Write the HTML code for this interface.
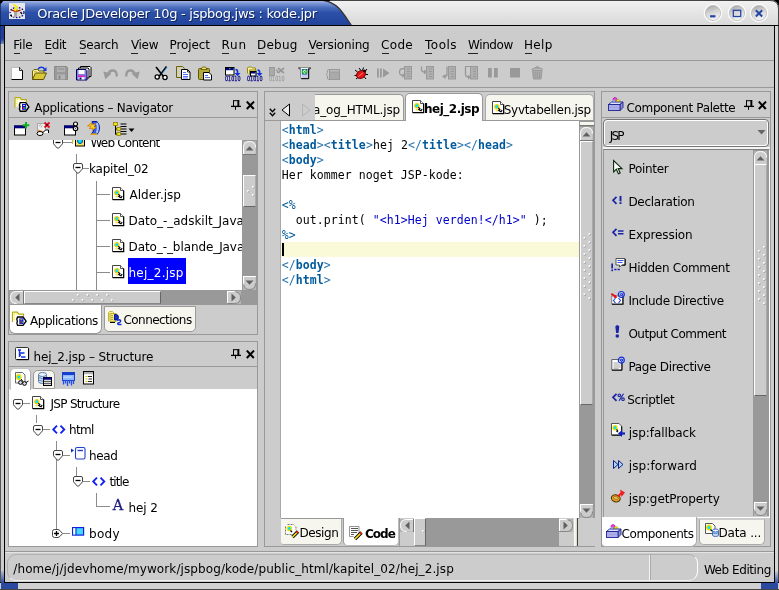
<!DOCTYPE html>
<html lang="da"><head><meta charset="utf-8"><title>Oracle JDeveloper 10g - jspbog.jws : kode.jpr</title>
<style>
html,body{margin:0;padding:0;}
body{width:779px;height:590px;overflow:hidden;background:#cccccc;font-family:"DejaVu Sans","Liberation Sans",sans-serif;font-size:12px;color:#000;}
#win{will-change:transform;position:relative;width:779px;height:590px;overflow:hidden;background:#cccccc;}
#win div,#win span.t,#win span.m,#win svg{position:absolute;box-sizing:border-box;}
#win div{overflow:hidden;}
span.t{font-family:"DejaVu Sans","Liberation Sans",sans-serif;font-size:12px;line-height:14px;white-space:pre;color:#000;}
span.m{font-family:"DejaVu Sans Mono","Liberation Mono",monospace;font-size:11.5px;line-height:15px;white-space:pre;color:#000;}
span.m b{font-weight:bold;}
.k{color:#005a9c;}
.s{color:#0000c8;}
.kb{color:#2a74ad;}

</style></head>
<body>
<div id="win">
<div style="left:0px;top:0px;width:779px;height:26px;background:linear-gradient(#f2f2f2,#e2e2e2 60%,#d8d8d8);"></div>
<svg style="left:0;top:0" width="779" height="26" viewBox="0 0 779 26"><defs><linearGradient id="tb" x1="0" y1="0" x2="0" y2="1"><stop offset="0.04" stop-color="#a4b8e6"/><stop offset="0.12" stop-color="#7f9ad8"/><stop offset="0.3" stop-color="#4a6cbc"/><stop offset="0.5" stop-color="#2c50a8"/><stop offset="1" stop-color="#21429a"/></linearGradient></defs><path d="M0 0H324C338 3 343 13 351.500 25.5H0z" fill="url(#tb)"/><path d="M324 0.5C338 3 343 13 351.500 25.500" fill="none" stroke="#333" stroke-width="1.300"/><path d="M0 0.5H330" stroke="#000" stroke-width="1"/><path d="M0 0H4L0 5z" fill="#000"/><path d="M0 3V26" stroke="#1a2a5a" stroke-width="1.600"/><path d="M330 0.5H770Q778.500 0.500 778.500 9V26" stroke="#444" stroke-width="1" fill="none"/><path d="M770 0H779V9Q779 0 770 0z" fill="#000"/><path d="M0 25.5H779" stroke="#000" stroke-width="1"/></svg>
<span class="t" style="left:37.2px;top:6px;letter-spacing:-0.286px;font-size:13px;line-height:16px;color:#fff;text-shadow:1px 1px 0 #10245a;">Oracle JDeveloper 10g - jspbog.jws : kode.jpr</span>
<svg style="left:9px;top:3px;" width="16" height="16" viewBox="0 0 16 16"><rect width="16" height="16" fill="#e8e8e8"/><ellipse cx="8" cy="9.500" rx="7" ry="5" fill="none" stroke="#000090" stroke-width="1.300" stroke-dasharray="1.500 1.500"/><path d="M11.500 9l1.500 2" stroke="#000" stroke-width="1.300"/><path d="M1.500 12l1.500 1.500" stroke="#000" stroke-width="1.200"/><path d="M3 7.500v4q0 2.500 4 2.500t4-2.500v-4z" fill="#d8d8d8"/><path d="M5 8.500v5.500h3v-5.500z" fill="#a8a8a8"/><path d="M3.200 8v4.500q0.500 1 1.500 1.200v-5.500z" fill="#fff"/><path d="M2.500 7q4.500 2.500 9 0" fill="none" stroke="#c00000" stroke-width="1.300"/><path d="M4 1l3 1.500l2 2l-2.500 1l2.500 2l-3 0.500l-1-2l2-1.500z" fill="#f8f000" stroke="#f8f000" stroke-width="0.800"/><path d="M7 7.500l2-0.500" stroke="#909000" stroke-width="1.200"/></svg>
<svg style="left:703.3px;top:2.7px;" width="20" height="20" viewBox="0 0 20 20"><defs><linearGradient id="bgmin" x1="0" y1="0" x2="0.3" y2="1"><stop offset="0" stop-color="#a0a0a0"/><stop offset="0.55" stop-color="#d6d6d6"/><stop offset="1" stop-color="#f2f2f2"/></linearGradient></defs><circle cx="10" cy="10" r="9.300" fill="#fff" opacity="0.850"/><circle cx="10" cy="10" r="7.600" fill="url(#bgmin)" stroke="#b8b8b8" stroke-width="0.800"/><path d="M7 13.300h5.500" stroke="#2446a6" stroke-width="2.200"/></svg>
<svg style="left:726.8px;top:2.7px;" width="20" height="20" viewBox="0 0 20 20"><defs><linearGradient id="bgmax" x1="0" y1="0" x2="0.3" y2="1"><stop offset="0" stop-color="#a0a0a0"/><stop offset="0.55" stop-color="#d6d6d6"/><stop offset="1" stop-color="#f2f2f2"/></linearGradient></defs><circle cx="10" cy="10" r="9.300" fill="#fff" opacity="0.850"/><circle cx="10" cy="10" r="7.600" fill="url(#bgmax)" stroke="#b8b8b8" stroke-width="0.800"/><rect x="6.300" y="7.300" width="7.400" height="6.200" fill="none" stroke="#2446a6" stroke-width="1.300"/></svg>
<svg style="left:749.4px;top:2.7px;" width="20" height="20" viewBox="0 0 20 20"><defs><linearGradient id="bgclose" x1="0" y1="0" x2="0.3" y2="1"><stop offset="0" stop-color="#a0a0a0"/><stop offset="0.55" stop-color="#d6d6d6"/><stop offset="1" stop-color="#f2f2f2"/></linearGradient></defs><circle cx="10" cy="10" r="9.300" fill="#fff" opacity="0.850"/><circle cx="10" cy="10" r="7.600" fill="url(#bgclose)" stroke="#b8b8b8" stroke-width="0.800"/><path d="M6.800 7.300l6.400 6.200m0-6.200l-6.400 6.200" stroke="#2446a6" stroke-width="1.900"/></svg>
<div style="left:0px;top:26px;width:5px;height:557px;background:#cccccc;border-left:1px solid #555;border-right:1px solid #000;"></div>
<div style="left:0px;top:26px;width:4px;height:18px;background:linear-gradient(#1f3f96,#1f3f96 70%,#8090b8);border-left:1px solid #16307a;"></div>
<div style="left:774px;top:26px;width:5px;height:557px;background:#d4d4d4;border-left:1px solid #000;border-right:1px solid #444;"></div>
<div style="left:0px;top:582px;width:779px;height:8px;background:#d0d0d0;border-top:1px solid #000;border-bottom:1px solid #444;"></div>
<div style="left:1px;top:571px;width:3px;height:12px;background:linear-gradient(#b4bcd4,#2a4aa0);"></div>
<div style="left:1px;top:583px;width:17px;height:6px;background:#2a4aa0;"></div>
<div style="left:761px;top:583px;width:17px;height:6px;background:#2a4aa0;"></div>
<div style="left:775px;top:571px;width:3px;height:13px;background:linear-gradient(#c8ccdc,#2a4aa0);"></div>
<span class="t" style="left:13.3px;top:38px;letter-spacing:-0.267px;">File</span>
<div style="left:14px;top:53px;width:6px;height:1px;background:#222;"></div>
<span class="t" style="left:44.5px;top:38px;letter-spacing:-0.4px;">Edit</span>
<div style="left:45px;top:53px;width:6.5px;height:1px;background:#222;"></div>
<span class="t" style="left:79px;top:38px;letter-spacing:-0.3px;">Search</span>
<div style="left:80px;top:53px;width:6px;height:1px;background:#222;"></div>
<span class="t" style="left:131px;top:38px;letter-spacing:-0.333px;">View</span>
<div style="left:131px;top:53px;width:7px;height:1px;background:#222;"></div>
<span class="t" style="left:169.5px;top:38px;letter-spacing:-0.083px;">Project</span>
<div style="left:170px;top:53px;width:6px;height:1px;background:#222;"></div>
<span class="t" style="left:221.5px;top:38px;letter-spacing:0.75px;">Run</span>
<div style="left:222px;top:53px;width:6.5px;height:1px;background:#222;"></div>
<span class="t" style="left:257px;top:38px;letter-spacing:0.25px;">Debug</span>
<div style="left:258px;top:53px;width:7px;height:1px;background:#222;"></div>
<span class="t" style="left:308.5px;top:38px;letter-spacing:-0.167px;">Versioning</span>
<div style="left:308px;top:53px;width:7px;height:1px;background:#222;"></div>
<span class="t" style="left:381px;top:38px;letter-spacing:0.333px;">Code</span>
<div style="left:382px;top:53px;width:7px;height:1px;background:#222;"></div>
<span class="t" style="left:425px;top:38px;letter-spacing:0.5px;">Tools</span>
<div style="left:425px;top:53px;width:7px;height:1px;background:#222;"></div>
<span class="t" style="left:468px;top:38px;letter-spacing:-0.4px;">Window</span>
<div style="left:468px;top:53px;width:10px;height:1px;background:#222;"></div>
<span class="t" style="left:524px;top:38px;letter-spacing:0.333px;">Help</span>
<div style="left:525px;top:53px;width:7px;height:1px;background:#222;"></div>
<div style="left:5px;top:60px;width:769px;height:1px;background:#999;"></div>
<div style="left:5px;top:87px;width:769px;height:1px;background:#999;"></div>
<div style="left:8px;top:91px;width:250px;height:244px;border:1px solid #999;"></div>
<div style="left:9px;top:117px;width:248px;height:1px;background:#999;"></div>
<span class="t" style="left:34.3px;top:101px;letter-spacing:-0.296px;">Applications – Navigator</span>
<svg style="left:231px;top:100px;" width="10" height="10" viewBox="0 0 10 10"><path d="M2 0.700h6.200M2.500 0.500v5.800M4.500 6.500v3.300" stroke="#000" stroke-width="1" fill="none"/><rect x="6.400" y="0.200" width="1.900" height="6" fill="#000"/><path d="M0 6.400h10" stroke="#000" stroke-width="1.300"/></svg>
<svg style="left:246px;top:101px;" width="9" height="9" viewBox="0 0 9 9"><path d="M0.800 0.600l7 7.400m0.200-7.400l-7.200 7.400" stroke="#000" stroke-width="2" fill="none"/></svg>
<svg style="left:14px;top:97px;overflow:visible;" width="16" height="16" viewBox="0 0 16 16"><path d="M1 10.800V1.200Q1 0.600 1.600 0.600H6L7.500 2.600H12.300V5" fill="#fffff4" stroke="#b4ac10" stroke-width="1.200"/><path d="M2.800 2.500h3M2.800 2.500v7" stroke="#f4ec40" stroke-width="1.200" stroke-dasharray="1 0.700"/><path d="M6.200 5.600H11.800L14.900 9.900L11.800 14.200H6.200Q4.800 12 6 9.900Q4.800 7.600 6.200 5.600z" fill="#fff" stroke="#000" stroke-width="1.400"/><rect x="8" y="7" width="4.200" height="5.800" fill="#0010d8"/><rect x="9" y="8" width="2.200" height="0.900" fill="#f8f060"/><rect x="8.800" y="10" width="1.300" height="2" fill="#f01030"/><rect x="10.200" y="10" width="1.300" height="2" fill="#10c020"/></svg>
<svg style="left:14px;top:121.5px;overflow:visible;" width="16" height="16" viewBox="0 0 16 16"><rect x="0.5" y="4.0" width="11" height="9" fill="#fff" stroke="#000"/><rect x="0" y="3.5" width="12" height="2.800" fill="#000080"/><path d="M12 0v6.500M8.800 3.200h6.500" stroke="#10b020" stroke-width="2"/></svg>
<svg style="left:36px;top:121.5px;overflow:visible;" width="16" height="16" viewBox="0 0 16 16"><path d="M1.500 1.500h8v8h-8z" fill="#eee" stroke="#999" stroke-width="0.8"/><path d="M3 4l2-1.500M5 5.500l1-2" stroke="#888" stroke-width="0.7"/><path d="M8.500 0.500l5 5m0-5l-5 5" stroke="#e01020" stroke-width="1.900"/><rect x="10.200" y="2.200" width="1.600" height="1.600" fill="#400"/><path d="M2 8.500l4 1.500" stroke="#f09020" stroke-width="2"/><ellipse cx="4" cy="11.500" rx="3" ry="2" fill="#fff" stroke="#000" stroke-width="1"/><path d="M6.500 11l3-3h3v3" fill="#fff" stroke="#000" stroke-width="1"/></svg>
<svg style="left:64px;top:121.5px;overflow:visible;" width="16" height="16" viewBox="0 0 16 16"><rect x="0.5" y="4.0" width="11" height="9" fill="#fff" stroke="#000"/><rect x="0" y="3.5" width="12" height="2.800" fill="#000080"/><circle cx="11.500" cy="2" r="2" fill="#fff" stroke="#000" stroke-width="1.200"/><circle cx="11.500" cy="6.500" r="2.200" fill="#fff" stroke="#000" stroke-width="1.200"/><circle cx="11.500" cy="6.500" r="0.700" fill="#555"/></svg>
<svg style="left:87px;top:121px;overflow:visible;" width="16" height="16" viewBox="0 0 16 16"><path d="M5 0.500h5q2.500 3 2.500 6.500t-2.500 6.500h-6q3-3 3-6.500t-2-6.500z" fill="#3858e0" stroke="#0818a0" stroke-width="1"/><path d="M9.800 2q2 4.500 0 10" fill="none" stroke="#a8c8ff" stroke-width="2"/><path d="M0.500 5l4.500-3.500l-0.500 2.500l4 -1.500l-1.500 3.500l2.500 0l-4 3.500l0.500-2.500l-3.500 1l1.500-3z" fill="#ffd820" stroke="#c07000" stroke-width="0.700"/><path d="M3.500 13.200h6.500" stroke="#f0b000" stroke-width="1.500"/></svg>
<svg style="left:113px;top:122px;overflow:visible;" width="16" height="16" viewBox="0 0 16 16"><path d="M2.500 2v10.500M2.500 7h3M2.500 12h3" stroke="#000" stroke-width="1" fill="none"/><path d="M7.500 2h6M7.500 4.500h6M7.500 7h6M7.500 9.500h6M7.500 12h6" stroke="#000" stroke-width="1"/><rect x="0.500" y="0.500" width="4" height="3" fill="#f0e020" stroke="#908000" stroke-width="0.8"/><rect x="4" y="5.500" width="3.500" height="3" fill="#f0e020" stroke="#908000" stroke-width="0.8"/><rect x="4" y="10.500" width="3.500" height="3" fill="#f0e020" stroke="#908000" stroke-width="0.8"/><path d="M15.500 6.500h6l-3 3.500z" fill="#000"/></svg>
<div style="left:242px;top:140px;width:16px;height:150px;background:#999;"></div>
<svg style="left:243px;top:140.5px;" width="13" height="14" viewBox="0 0 13 14"><rect width="13" height="14" fill="#b4b4b4"/><path d="M0.5 14V6.5Q0.5 0.5 6.5 0.5Q12.5 0.5 12.5 6.5V14z" fill="#ccc"/><path d="M0.5 14V6.5Q0.5 0.5 6.5 0.5Q12.5 0.5 12.5 6.5" fill="none" stroke="#fff"/><path d="M0 13.5H13" stroke="#777"/><path d="M2.5 9.500h8l-4 -4.300z" fill="#606060"/></svg>
<svg style="left:243px;top:275.5px;" width="13" height="14" viewBox="0 0 13 14"><rect width="13" height="14" fill="#b4b4b4"/><path d="M0.5 0V7.5Q0.5 13.5 6.5 13.5Q12.5 13.5 12.5 7.5V0z" fill="#ccc"/><path d="M0.5 0V7.5" stroke="#fff"/><path d="M0 0.5H13" stroke="#fff"/><path d="M1 9Q1.5 13.5 6.5 13.5Q12.5 13.5 12.5 7.5" fill="none" stroke="#777" stroke-width="0.8"/><path d="M2.5 4.500h8l-4 4.300z" fill="#606060"/></svg>
<div style="left:243px;top:175px;width:13px;height:32px;background:#ccc;border-top:1px solid #fff;border-left:1px solid #fff;border-bottom:1px solid #666;border-right:1px solid #aaa;"></div>
<svg style="left:243px;top:175px;" width="13" height="32" viewBox="0 0 13 32"><rect x="9.8" y="11.8" width="1.500" height="1.500" fill="#8a8a8a"/><rect x="9" y="11" width="1.700" height="1.700" fill="#fff"/><rect x="4.8" y="15.8" width="1.500" height="1.500" fill="#8a8a8a"/><rect x="4" y="15" width="1.700" height="1.700" fill="#fff"/><rect x="9.8" y="19.8" width="1.500" height="1.500" fill="#8a8a8a"/><rect x="9" y="19" width="1.700" height="1.700" fill="#fff"/></svg>
<div style="left:9px;top:290px;width:233px;height:15px;background:#999;"></div>
<svg style="left:10px;top:291px;" width="14" height="13" viewBox="0 0 14 13"><rect width="14" height="13" fill="#b4b4b4"/><path d="M14 0.5H6.5Q0.5 0.5 0.5 6.5Q0.5 12.5 6.5 12.5H14z" fill="#ccc"/><path d="M14 0.5H6.5Q0.5 0.5 0.5 6.5Q0.5 12.5 6.5 12.5" fill="none" stroke="#fff"/><path d="M13.5 0V13" stroke="#777"/><path d="M9.500 2.5v8l-4.300 -4z" fill="#606060"/></svg>
<svg style="left:227px;top:291px;" width="14" height="13" viewBox="0 0 14 13"><rect width="14" height="13" fill="#b4b4b4"/><path d="M0 0.5H7.5Q13.5 0.5 13.5 6.5Q13.5 12.5 7.5 12.5H0z" fill="#ccc"/><path d="M0.5 0V13" stroke="#fff"/><path d="M0 0.5H7.5" stroke="#fff"/><path d="M9 1Q13.5 1.5 13.5 6.5Q13.5 12.5 7.5 12.5H0" fill="none" stroke="#777" stroke-width="0.8"/><path d="M4.500 2.5v8l4.300 -4z" fill="#606060"/></svg>
<div style="left:24px;top:291px;width:137px;height:13px;background:#ccc;border-top:1px solid #fff;border-left:1px solid #fff;border-bottom:1px solid #888;border-right:1px solid #666;"></div>
<svg style="left:24px;top:291px;" width="137" height="13" viewBox="0 0 137 13"><rect x="48.8" y="8.8" width="1.500" height="1.500" fill="#8a8a8a"/><rect x="48.0" y="8" width="1.700" height="1.700" fill="#fff"/><rect x="53.699999999999996" y="3.8" width="1.500" height="1.500" fill="#8a8a8a"/><rect x="52.9" y="3" width="1.700" height="1.700" fill="#fff"/><rect x="58.5" y="8.8" width="1.500" height="1.500" fill="#8a8a8a"/><rect x="57.7" y="8" width="1.700" height="1.700" fill="#fff"/><rect x="63.4" y="3.8" width="1.500" height="1.500" fill="#8a8a8a"/><rect x="62.6" y="3" width="1.700" height="1.700" fill="#fff"/><rect x="68.3" y="8.8" width="1.500" height="1.500" fill="#8a8a8a"/><rect x="67.5" y="8" width="1.700" height="1.700" fill="#fff"/><rect x="73.1" y="3.8" width="1.500" height="1.500" fill="#8a8a8a"/><rect x="72.3" y="3" width="1.700" height="1.700" fill="#fff"/><rect x="78.0" y="8.8" width="1.500" height="1.500" fill="#8a8a8a"/><rect x="77.2" y="8" width="1.700" height="1.700" fill="#fff"/><rect x="82.89999999999999" y="3.8" width="1.500" height="1.500" fill="#8a8a8a"/><rect x="82.1" y="3" width="1.700" height="1.700" fill="#fff"/><rect x="87.8" y="8.8" width="1.500" height="1.500" fill="#8a8a8a"/><rect x="87.0" y="8" width="1.700" height="1.700" fill="#fff"/></svg>
<div style="left:242px;top:290px;width:16px;height:15px;background:#999;"></div>
<div style="left:9px;top:140px;width:233px;height:150px;background:#fff;">
<div style="left:67px;top:14px;width:1px;height:136px;background:#8c8c8c;"></div>
<div style="left:87px;top:41px;width:1px;height:110px;background:#8c8c8c;"></div>
<div style="left:53px;top:2px;width:10px;height:1px;background:#8c8c8c;"></div>
<div style="left:73px;top:28px;width:7px;height:1px;background:#8c8c8c;"></div>
<svg style="left:44px;top:-2.5px;" width="10" height="11" viewBox="0 0 10 11"><path d="M0.500 2Q0.500 0.500 2 0.500H8Q9.500 0.500 9.500 2V5.800L5.800 10Q5 10.800 4.200 10L0.500 5.800z" fill="#fff" stroke="#444" stroke-width="1"/><path d="M2.500 4.500h5" stroke="#000" stroke-width="1.300"/></svg>
<svg style="left:64px;top:23px;" width="10" height="11" viewBox="0 0 10 11"><path d="M0.500 2Q0.500 0.500 2 0.500H8Q9.500 0.500 9.500 2V5.800L5.800 10Q5 10.800 4.200 10L0.500 5.800z" fill="#fff" stroke="#444" stroke-width="1"/><path d="M2.500 4.500h5" stroke="#000" stroke-width="1.300"/></svg>
<svg style="left:63px;top:-7px;" width="16" height="16" viewBox="0 0 16 16"><path d="M0.500 11v-8h3v-2h3" fill="#f8f0a0" stroke="#c0b020" stroke-width="0.9"/><rect x="3.500" y="3.500" width="9" height="9.500" fill="#f8e860" stroke="#000" stroke-width="1"/><circle cx="8" cy="8" r="2.500" fill="#00e0ff" stroke="#0040c0" stroke-width="1"/></svg>
<div style="left:88px;top:54px;width:13px;height:1px;background:#8c8c8c;"></div>
<svg style="left:103px;top:46.5px;overflow:visible;" width="12" height="13" viewBox="0 0 12 13"><path d="M0.500 0.500h8l3 3v9h-11z" fill="#fff" stroke="#444" stroke-width="1"/><path d="M8.500 0.500v3h3" fill="#fff" stroke="#444" stroke-width="0.9"/><path d="M11.700 3.500v9.200h-11" fill="none" stroke="#000" stroke-width="1.200"/><circle cx="4.800" cy="5.800" r="2.100" fill="#00e0ff" stroke="#f0d000" stroke-width="1.300"/><path d="M3.500 9.500q1.500 1 3 0" fill="none" stroke="#f0d000" stroke-width="0.9"/><path d="M6.300 7.300l1.500 1.200l-1 1l2.200 1.200l1.200-1.500" stroke="#000" stroke-width="1.200" fill="none"/></svg>
<div style="left:88px;top:80px;width:13px;height:1px;background:#8c8c8c;"></div>
<svg style="left:103px;top:72.5px;overflow:visible;" width="12" height="13" viewBox="0 0 12 13"><path d="M0.500 0.500h8l3 3v9h-11z" fill="#fff" stroke="#444" stroke-width="1"/><path d="M8.500 0.500v3h3" fill="#fff" stroke="#444" stroke-width="0.9"/><path d="M11.700 3.500v9.200h-11" fill="none" stroke="#000" stroke-width="1.200"/><circle cx="4.800" cy="5.800" r="2.100" fill="#00e0ff" stroke="#f0d000" stroke-width="1.300"/><path d="M3.500 9.500q1.500 1 3 0" fill="none" stroke="#f0d000" stroke-width="0.9"/><path d="M6.300 7.300l1.500 1.200l-1 1l2.200 1.200l1.200-1.500" stroke="#000" stroke-width="1.200" fill="none"/></svg>
<div style="left:88px;top:106px;width:13px;height:1px;background:#8c8c8c;"></div>
<svg style="left:103px;top:98.5px;overflow:visible;" width="12" height="13" viewBox="0 0 12 13"><path d="M0.500 0.500h8l3 3v9h-11z" fill="#fff" stroke="#444" stroke-width="1"/><path d="M8.500 0.500v3h3" fill="#fff" stroke="#444" stroke-width="0.9"/><path d="M11.700 3.500v9.200h-11" fill="none" stroke="#000" stroke-width="1.200"/><circle cx="4.800" cy="5.800" r="2.100" fill="#00e0ff" stroke="#f0d000" stroke-width="1.300"/><path d="M3.500 9.500q1.500 1 3 0" fill="none" stroke="#f0d000" stroke-width="0.9"/><path d="M6.300 7.300l1.500 1.200l-1 1l2.200 1.200l1.200-1.500" stroke="#000" stroke-width="1.200" fill="none"/></svg>
<div style="left:88px;top:132px;width:13px;height:1px;background:#8c8c8c;"></div>
<svg style="left:103px;top:124.5px;overflow:visible;" width="12" height="13" viewBox="0 0 12 13"><path d="M0.500 0.500h8l3 3v9h-11z" fill="#fff" stroke="#444" stroke-width="1"/><path d="M8.500 0.500v3h3" fill="#fff" stroke="#444" stroke-width="0.9"/><path d="M11.700 3.500v9.200h-11" fill="none" stroke="#000" stroke-width="1.200"/><circle cx="4.800" cy="5.800" r="2.100" fill="#00e0ff" stroke="#f0d000" stroke-width="1.300"/><path d="M3.500 9.500q1.500 1 3 0" fill="none" stroke="#f0d000" stroke-width="0.9"/><path d="M6.300 7.300l1.500 1.200l-1 1l2.200 1.200l1.200-1.500" stroke="#000" stroke-width="1.200" fill="none"/></svg>
<div style="left:119px;top:118px;width:58px;height:26px;background:#0000ff;"></div>
<span class="t" style="left:120.5px;top:48px;letter-spacing:0.0px;">Alder.jsp</span>
<span class="t" style="left:119.5px;top:74px;letter-spacing:-0.028px;">Dato_-_adskilt_Java</span>
<span class="t" style="left:119.5px;top:100px;letter-spacing:-0.088px;">Dato_-_blande_Java</span>
<span class="t" style="left:119.5px;top:126px;letter-spacing:0.25px;color:#fff;">hej_2.jsp</span>
<span class="t" style="left:80px;top:22px;letter-spacing:-0.222px;">kapitel_02</span>
<span class="t" style="left:81.5px;top:-4px;letter-spacing:-0.8px;">Web Content</span>
</div>
<div style="left:9px;top:305px;width:93px;height:29px;background:#fff;border-radius:0 0 6px 6px;border:1px solid #999;border-top:none;"></div>
<div style="left:104px;top:306px;width:92px;height:26px;background:#f7f6ee;border-radius:0 0 5px 5px;border:1px solid #999;"></div>
<svg style="left:12.5px;top:311px;overflow:visible;" width="15" height="15" viewBox="0 0 15 15"><g transform="translate(-1.500 0.500) scale(0.980)"><path d="M1 10.800V1.200Q1 0.600 1.600 0.600H6L7.500 2.600H12.300V5" fill="#fffff4" stroke="#b4ac10" stroke-width="1.200"/><path d="M2.800 2.500h3M2.800 2.500v7" stroke="#f4ec40" stroke-width="1.200" stroke-dasharray="1 0.700"/><path d="M6.200 5.600H11.800L14.900 9.900L11.800 14.200H6.200Q4.800 12 6 9.900Q4.800 7.600 6.200 5.600z" fill="#fff" stroke="#000" stroke-width="1.400"/><rect x="8" y="7" width="4.200" height="5.800" fill="#0010d8"/><rect x="9" y="8" width="2.200" height="0.900" fill="#f8f060"/><rect x="8.800" y="10" width="1.300" height="2" fill="#f01030"/><rect x="10.200" y="10" width="1.300" height="2" fill="#10c020"/></g></svg>
<svg style="left:108px;top:311px;overflow:visible;" width="14" height="14" viewBox="0 0 14 14"><path d="M0.500 10.500v-9l1-1h3l1 1v2" fill="#f8f0a0" stroke="#c0b020" stroke-width="0.900"/><rect x="2" y="2.500" width="6" height="8" fill="#f0e880" stroke="#b0a020" stroke-width="0.800"/><path d="M3 4.500h2M3 6.500h2M3 8.500h2" stroke="#a09030" stroke-width="0.800"/><path d="M6.500 3.500v5.500h1.500q2.500 0 2.500-2.700t-2.500-2.800z" fill="#1030d0" stroke="#000060" stroke-width="0.800"/><path d="M9 9.500q2.500-1.500 3.500 0t-2.500 2.500q-1 1 0.500 1.500h3" fill="none" stroke="#1030d0" stroke-width="1.400"/><path d="M2 11.500h5" stroke="#000" stroke-width="1"/></svg>
<span class="t" style="left:30px;top:314px;letter-spacing:-0.455px;">Applications</span>
<span class="t" style="left:123.5px;top:313px;letter-spacing:-0.55px;">Connections</span>
<div style="left:8px;top:341px;width:250px;height:206px;border:1px solid #999;"></div>
<div style="left:9px;top:366px;width:248px;height:1px;background:#999;"></div>
<span class="t" style="left:33.5px;top:350px;letter-spacing:-0.125px;">hej_2.jsp – Structure</span>
<svg style="left:231px;top:349px;" width="10" height="10" viewBox="0 0 10 10"><path d="M2 0.700h6.200M2.500 0.500v5.800M4.500 6.500v3.300" stroke="#000" stroke-width="1" fill="none"/><rect x="6.400" y="0.200" width="1.900" height="6" fill="#000"/><path d="M0 6.400h10" stroke="#000" stroke-width="1.300"/></svg>
<svg style="left:246px;top:350px;" width="9" height="9" viewBox="0 0 9 9"><path d="M0.800 0.600l7 7.400m0.200-7.400l-7.200 7.400" stroke="#000" stroke-width="2" fill="none"/></svg>
<div style="left:9px;top:389px;width:248px;height:157px;background:#fff;"></div>
<svg style="left:15px;top:347px;overflow:visible;" width="14" height="13" viewBox="0 0 14 13"><rect x="0.500" y="0.500" width="13" height="12" rx="1" fill="#fff" stroke="#333" stroke-width="1"/><path d="M13.600 1.500v11.200h-12" fill="none" stroke="#000" stroke-width="1"/><path d="M3 3h3M4.500 3.500v6.500M4.500 6h5M4.500 8h1.500M6 10h4.500" stroke="#1030e0" stroke-width="1.400" fill="none"/></svg>
<div style="left:10px;top:368px;width:21px;height:22px;background:#fff;border-radius:5px 5px 0 0;border:1px solid #c4c4c4;border-right-color:#aaa;border-bottom:none;"></div>
<div style="left:33px;top:370px;width:22px;height:19px;background:#f7f6ee;border-radius:5px 5px 0 0;border:1px solid #999;"></div>
<svg style="left:14.5px;top:372px;overflow:visible;" width="14" height="14" viewBox="0 0 14 14"><path d="M0.500 0.500h7l2.500 2.500v8h-9.500z" fill="#fff" stroke="#555" stroke-width="0.900"/><circle cx="3.800" cy="5" r="2.200" fill="#00e0ff" stroke="#f0e000" stroke-width="1.400"/><circle cx="5.500" cy="10.500" r="1.900" fill="#dde" stroke="#000" stroke-width="1"/><circle cx="9.500" cy="11.500" r="1.900" fill="#dde" stroke="#000" stroke-width="1"/><path d="M6 7l2 2.500M11 10.500l2.500-1.500" stroke="#000" stroke-width="1" fill="none"/></svg>
<svg style="left:38px;top:372px;overflow:visible;" width="14" height="14" viewBox="0 0 14 14"><path d="M0.500 2.500v7q0 2 4 2t4-2v-7" fill="#c8e0f8" stroke="#5070a0" stroke-width="0.900"/><ellipse cx="4.500" cy="2.500" rx="4" ry="2" fill="#e8f4ff" stroke="#5070a0" stroke-width="0.900"/><path d="M0.500 5.500q4 2.500 8 0M0.500 8q4 2.500 8 0" fill="none" stroke="#5070a0" stroke-width="0.800"/><rect x="5.500" y="5.500" width="8" height="8" fill="#d8d8d8" stroke="#000" stroke-width="1"/><rect x="5.500" y="5.500" width="8" height="2.200" fill="#000080"/><path d="M6 9.500h7M6 11.500h7" stroke="#555" stroke-width="0.900"/></svg>
<svg style="left:62px;top:372px;overflow:visible;" width="14" height="14" viewBox="0 0 14 14"><rect x="0.500" y="0.500" width="12" height="8" fill="#90b8ff" stroke="#1840d0" stroke-width="1"/><rect x="0.500" y="0.500" width="12" height="2.500" fill="#1840d0"/><path d="M1.500 6l1.500-1.500 1.500 1.500 1.500-1.500 1.500 1.500 1.500-1.500 1.500 1.500" stroke="#d8e8ff" stroke-width="1" fill="none"/><path d="M1.500 8.500v4M3.500 8.500v3M5.500 8.500v5.500M7.500 8.500v3M9.500 8.500v5M11.500 8.500v3.500" stroke="#2050e8" stroke-width="1.300"/></svg>
<svg style="left:83px;top:370.5px;overflow:visible;" width="11" height="14" viewBox="0 0 11 14"><rect x="0.500" y="0.500" width="10" height="12.500" fill="#fff" stroke="#000" stroke-width="1"/><rect x="1" y="1" width="9" height="2.200" fill="#b0b0b0"/><path d="M2.500 5.500h2M2.500 8h2M2.500 10.500h2" stroke="#d0c000" stroke-width="1.200"/><path d="M5 5.500h4M5.500 8h3.500M5 10.500h4" stroke="#222" stroke-width="1"/></svg>
<div style="left:36px;top:415px;width:1px;height:8px;background:#8c8c8c;"></div>
<div style="left:56px;top:441px;width:1px;height:88px;background:#8c8c8c;"></div>
<div style="left:76px;top:467px;width:1px;height:9px;background:#8c8c8c;"></div>
<div style="left:96px;top:493px;width:1px;height:14px;background:#8c8c8c;"></div>
<div style="left:96px;top:506px;width:14px;height:1px;background:#8c8c8c;"></div>
<div style="left:22px;top:403px;width:8px;height:1px;background:#8c8c8c;"></div>
<div style="left:42px;top:429px;width:8px;height:1px;background:#8c8c8c;"></div>
<div style="left:62px;top:455px;width:8px;height:1px;background:#8c8c8c;"></div>
<div style="left:82px;top:481px;width:8px;height:1px;background:#8c8c8c;"></div>
<div style="left:63px;top:533px;width:7px;height:1px;background:#8c8c8c;"></div>
<svg style="left:13px;top:399px;" width="10" height="11" viewBox="0 0 10 11"><path d="M0.500 2Q0.500 0.500 2 0.500H8Q9.500 0.500 9.500 2V5.800L5.800 10Q5 10.800 4.200 10L0.500 5.800z" fill="#fff" stroke="#444" stroke-width="1"/><path d="M2.500 4.500h5" stroke="#000" stroke-width="1.300"/></svg>
<svg style="left:32.5px;top:424.5px;" width="10" height="11" viewBox="0 0 10 11"><path d="M0.500 2Q0.500 0.500 2 0.500H8Q9.500 0.500 9.500 2V5.800L5.800 10Q5 10.800 4.200 10L0.500 5.800z" fill="#fff" stroke="#444" stroke-width="1"/><path d="M2.500 4.500h5" stroke="#000" stroke-width="1.300"/></svg>
<svg style="left:52.5px;top:450px;" width="10" height="11" viewBox="0 0 10 11"><path d="M0.500 2Q0.500 0.500 2 0.500H8Q9.500 0.500 9.500 2V5.800L5.800 10Q5 10.800 4.200 10L0.500 5.800z" fill="#fff" stroke="#444" stroke-width="1"/><path d="M2.500 4.500h5" stroke="#000" stroke-width="1.300"/></svg>
<svg style="left:72.5px;top:476px;" width="10" height="11" viewBox="0 0 10 11"><path d="M0.500 2Q0.500 0.500 2 0.500H8Q9.500 0.500 9.500 2V5.800L5.800 10Q5 10.800 4.200 10L0.500 5.800z" fill="#fff" stroke="#444" stroke-width="1"/><path d="M2.500 4.500h5" stroke="#000" stroke-width="1.300"/></svg>
<svg style="left:52px;top:528.5px;overflow:visible;" width="11" height="9" viewBox="0 0 11 9"><path d="M2.500 0.500Q0.500 0.500 0.500 2.500V6.500Q0.500 8.500 2.500 8.500H6Q7.500 8.500 10.500 4.500Q7.500 0.500 6 0.500z" fill="#fff" stroke="#444" stroke-width="1"/><path d="M2 4.500h5M4.500 2v5" stroke="#000" stroke-width="1.300"/></svg>
<svg style="left:32px;top:396px;overflow:visible;" width="12" height="13" viewBox="0 0 12 13"><path d="M0.500 0.500h8l3 3v9h-11z" fill="#fff" stroke="#444" stroke-width="1"/><path d="M8.500 0.500v3h3" fill="#fff" stroke="#444" stroke-width="0.9"/><path d="M11.700 3.500v9.200h-11" fill="none" stroke="#000" stroke-width="1.200"/><circle cx="4.800" cy="5.800" r="2.100" fill="#00e0ff" stroke="#f0d000" stroke-width="1.300"/><path d="M3.500 9.500q1.500 1 3 0" fill="none" stroke="#f0d000" stroke-width="0.9"/><path d="M6.300 7.300l1.500 1.200l-1 1l2.200 1.200l1.200-1.500" stroke="#000" stroke-width="1.200" fill="none"/></svg>
<svg style="left:51.5px;top:424.5px;overflow:visible;" width="13" height="9" viewBox="0 0 13 9"><path d="M5 0.700L1.200 4.500 5 8.300M8.500 0.700L12.300 4.500 8.500 8.300" fill="none" stroke="#1020f0" stroke-width="1.800"/></svg>
<svg style="left:70.5px;top:447px;overflow:visible;" width="15" height="13" viewBox="0 0 15 13"><path d="M0 1.500v4l3-2z" fill="#1030c0"/><rect x="4.500" y="0.500" width="9.500" height="11.500" rx="1.500" fill="#fff" stroke="#2040d0" stroke-width="1.100"/><path d="M6.500 3.500h5.500" stroke="#2040d0" stroke-width="1.400"/></svg>
<svg style="left:91.5px;top:476.5px;overflow:visible;" width="13" height="9" viewBox="0 0 13 9"><path d="M5 0.700L1.200 4.500 5 8.300M8.500 0.700L12.300 4.500 8.500 8.300" fill="none" stroke="#1020f0" stroke-width="1.800"/></svg>
<svg style="left:112px;top:500px;overflow:visible;" width="12" height="12" viewBox="0 0 12 12"><text x="6" y="10" text-anchor="middle" font-family="DejaVu Serif,Liberation Serif,serif" font-size="14.500" fill="#1a1a80" stroke="#1a1a80" stroke-width="0.300">A</text></svg>
<svg style="left:72px;top:527px;overflow:visible;" width="12" height="9" viewBox="0 0 12 9"><rect x="0.600" y="0.600" width="11" height="7.500" fill="#40d8ff" stroke="#1020e0" stroke-width="1.200"/><rect x="1.200" y="1.200" width="2.300" height="6.300" fill="#fff"/><path d="M4 1v7" stroke="#1020e0" stroke-width="1"/></svg>
<span class="t" style="left:50.5px;top:397px;letter-spacing:-0.708px;">JSP Structure</span>
<span class="t" style="left:69px;top:423px;letter-spacing:-0.667px;">html</span>
<span class="t" style="left:89px;top:449px;letter-spacing:-0.4px;">head</span>
<span class="t" style="left:109.5px;top:475px;letter-spacing:-0.925px;">title</span>
<span class="t" style="left:128.5px;top:501px;letter-spacing:-0.125px;">hej 2</span>
<span class="t" style="left:89px;top:527px;letter-spacing:0.267px;">body</span>
<div style="left:264px;top:91px;width:331px;height:456px;border:1px solid #999;"></div>
<svg style="left:269px;top:108px;" width="7" height="9" viewBox="0 0 7 9"><path d="M0.8 0.8l2.7 3 2.7-3M0.8 4.8l2.7 3 2.7-3" stroke="#000" stroke-width="1.3" fill="none"/></svg>
<svg style="left:281px;top:103px;" width="10" height="14" viewBox="0 0 10 14"><path d="M8.5 1v12L1 7z" fill="#eee" stroke="#000" stroke-width="1"/></svg>
<svg style="left:301px;top:103px;" width="10" height="14" viewBox="0 0 10 14"><path d="M1.5 1v12L9 7z" fill="none" stroke="#b4b4b4" stroke-width="1"/></svg>
<div style="left:315px;top:94px;width:89px;height:27px;">
<div style="left:0px;top:0px;width:89px;height:27px;background:#f7f6ee;border-top:1px solid #999;border-right:1px solid #999;border-radius:0 5px 0 0;"></div>
<span class="t" style="left:-2px;top:9px;letter-spacing:-0.125px;">a_og_HTML.jsp</span>
</div>
<div style="left:485px;top:94px;width:109px;height:27px;background:#f7f6ee;border:1px solid #aaa;border-bottom:none;border-radius:5px 5px 0 0;"></div>
<svg style="left:491.5px;top:100.5px;overflow:visible;" width="12" height="13" viewBox="0 0 12 13"><path d="M0.500 0.500h8l3 3v9h-11z" fill="#fff" stroke="#444" stroke-width="1"/><path d="M8.500 0.500v3h3" fill="#fff" stroke="#444" stroke-width="0.9"/><path d="M11.700 3.500v9.200h-11" fill="none" stroke="#000" stroke-width="1.200"/><circle cx="4.800" cy="5.800" r="2.100" fill="#00e0ff" stroke="#f0d000" stroke-width="1.300"/><path d="M3.500 9.500q1.500 1 3 0" fill="none" stroke="#f0d000" stroke-width="0.9"/><path d="M6.300 7.300l1.500 1.200l-1 1l2.200 1.200l1.200-1.500" stroke="#000" stroke-width="1.200" fill="none"/></svg>
<span class="t" style="left:503.8px;top:103px;letter-spacing:-0.307px;">Syvtabellen.jsp</span>
<div style="left:265px;top:120px;width:330px;height:1px;background:#999;"></div>
<div style="left:405px;top:93px;width:78px;height:29px;background:#fff;border:1px solid #999;border-bottom:none;border-radius:5px 5px 0 0;"></div>
<svg style="left:411.5px;top:99.5px;overflow:visible;" width="12" height="13" viewBox="0 0 12 13"><path d="M0.500 0.500h8l3 3v9h-11z" fill="#fff" stroke="#444" stroke-width="1"/><path d="M8.500 0.500v3h3" fill="#fff" stroke="#444" stroke-width="0.9"/><path d="M11.700 3.500v9.200h-11" fill="none" stroke="#000" stroke-width="1.200"/><circle cx="4.800" cy="5.800" r="2.100" fill="#00e0ff" stroke="#f0d000" stroke-width="1.300"/><path d="M3.500 9.500q1.500 1 3 0" fill="none" stroke="#f0d000" stroke-width="0.9"/><path d="M6.300 7.300l1.500 1.200l-1 1l2.200 1.200l1.200-1.500" stroke="#000" stroke-width="1.200" fill="none"/></svg>
<span class="t" style="left:424px;top:102px;letter-spacing:-0.5px;font-weight:bold;">hej_2.jsp</span>
<div style="left:265px;top:121px;width:16px;height:397px;background:#ccc;border-right:1px solid #a8a8a8;"></div>
<div style="left:281px;top:121px;width:298px;height:397px;background:#fff;">
<div style="left:0px;top:121px;width:298px;height:15px;background:#fbfad8;"></div>
<div style="left:1px;top:122px;width:2px;height:13px;background:#000;"></div>
<span class="m" style="left:0.8px;top:2px;letter-spacing:0.077px;"><span class="k"><span class="kb">&lt;</span><b>html</b><span class="kb">&gt;</span></span></span>
<span class="m" style="left:0.8px;top:17px;letter-spacing:0.077px;"><span class="k"><span class="kb">&lt;</span><b>head</b><span class="kb">&gt;</span></span><span class="k"><span class="kb">&lt;</span><b>title</b><span class="kb">&gt;</span></span>hej 2<span class="k"><span class="kb">&lt;/</span><b>title</b><span class="kb">&gt;</span></span><span class="k"><span class="kb">&lt;/</span><b>head</b><span class="kb">&gt;</span></span></span>
<span class="m" style="left:0.8px;top:32px;letter-spacing:0.077px;"><span class="k"><span class="kb">&lt;</span><b>body</b><span class="kb">&gt;</span></span></span>
<span class="m" style="left:0.8px;top:47px;letter-spacing:0.077px;">Her kommer noget JSP-kode:</span>
<span class="m" style="left:0.8px;top:77px;letter-spacing:0.077px;"><span class="k">&lt;%</span></span>
<span class="m" style="left:0.8px;top:92px;letter-spacing:0.077px;">  out.print( <span class="s">"&lt;h1&gt;Hej verden!&lt;/h1&gt;"</span> );</span>
<span class="m" style="left:0.8px;top:107px;letter-spacing:0.077px;"><span class="k">%&gt;</span></span>
<span class="m" style="left:0.8px;top:137px;letter-spacing:0.077px;"><span class="k"><span class="kb">&lt;/</span><b>body</b><span class="kb">&gt;</span></span></span>
<span class="m" style="left:0.8px;top:152px;letter-spacing:0.077px;"><span class="k"><span class="kb">&lt;/</span><b>html</b><span class="kb">&gt;</span></span></span>
</div>
<div style="left:579px;top:121px;width:16px;height:5px;background:#f7f6ee;border:1px solid #999;border-bottom:1px solid #777;"></div>
<div style="left:579px;top:126px;width:15px;height:392px;background:#999;"></div>
<svg style="left:580px;top:126.5px;" width="13" height="14" viewBox="0 0 13 14"><rect width="13" height="14" fill="#b4b4b4"/><path d="M0.5 14V6.5Q0.5 0.5 6.5 0.5Q12.5 0.5 12.5 6.5V14z" fill="#ccc"/><path d="M0.5 14V6.5Q0.5 0.5 6.5 0.5Q12.5 0.5 12.5 6.5" fill="none" stroke="#fff"/><path d="M0 13.5H13" stroke="#777"/><path d="M2.5 9.500h8l-4 -4.300z" fill="#606060"/></svg>
<svg style="left:580px;top:503.5px;" width="13" height="14" viewBox="0 0 13 14"><rect width="13" height="14" fill="#b4b4b4"/><path d="M0.5 0V7.5Q0.5 13.5 6.5 13.5Q12.5 13.5 12.5 7.5V0z" fill="#ccc"/><path d="M0.5 0V7.5" stroke="#fff"/><path d="M0 0.5H13" stroke="#fff"/><path d="M1 9Q1.5 13.5 6.5 13.5Q12.5 13.5 12.5 7.5" fill="none" stroke="#777" stroke-width="0.8"/><path d="M2.5 4.500h8l-4 4.300z" fill="#606060"/></svg>
<div style="left:580px;top:141px;width:13px;height:264px;background:#ccc;border-top:1px solid #fff;border-left:1px solid #fff;border-bottom:1px solid #666;border-right:1px solid #aaa;"></div>
<svg style="left:580px;top:141px;" width="13" height="264" viewBox="0 0 13 264"><rect x="9.3" y="92.8" width="1.500" height="1.500" fill="#8a8a8a"/><rect x="8.5" y="92.0" width="1.700" height="1.700" fill="#fff"/><rect x="9.3" y="100.8" width="1.500" height="1.500" fill="#8a8a8a"/><rect x="8.5" y="100.0" width="1.700" height="1.700" fill="#fff"/><rect x="9.3" y="108.89999999999999" width="1.500" height="1.500" fill="#8a8a8a"/><rect x="8.5" y="108.1" width="1.700" height="1.700" fill="#fff"/><rect x="9.3" y="117.0" width="1.500" height="1.500" fill="#8a8a8a"/><rect x="8.5" y="116.2" width="1.700" height="1.700" fill="#fff"/><rect x="9.3" y="125.0" width="1.500" height="1.500" fill="#8a8a8a"/><rect x="8.5" y="124.2" width="1.700" height="1.700" fill="#fff"/><rect x="9.3" y="133.0" width="1.500" height="1.500" fill="#8a8a8a"/><rect x="8.5" y="132.2" width="1.700" height="1.700" fill="#fff"/><rect x="9.3" y="141.10000000000002" width="1.500" height="1.500" fill="#8a8a8a"/><rect x="8.5" y="140.3" width="1.700" height="1.700" fill="#fff"/><rect x="9.3" y="149.20000000000002" width="1.500" height="1.500" fill="#8a8a8a"/><rect x="8.5" y="148.4" width="1.700" height="1.700" fill="#fff"/><rect x="9.3" y="157.20000000000002" width="1.500" height="1.500" fill="#8a8a8a"/><rect x="8.5" y="156.4" width="1.700" height="1.700" fill="#fff"/><rect x="4.3" y="96.8" width="1.500" height="1.500" fill="#8a8a8a"/><rect x="3.5" y="96.0" width="1.700" height="1.700" fill="#fff"/><rect x="4.3" y="104.8" width="1.500" height="1.500" fill="#8a8a8a"/><rect x="3.5" y="104.0" width="1.700" height="1.700" fill="#fff"/><rect x="4.3" y="112.89999999999999" width="1.500" height="1.500" fill="#8a8a8a"/><rect x="3.5" y="112.1" width="1.700" height="1.700" fill="#fff"/><rect x="4.3" y="121.0" width="1.500" height="1.500" fill="#8a8a8a"/><rect x="3.5" y="120.2" width="1.700" height="1.700" fill="#fff"/><rect x="4.3" y="129.0" width="1.500" height="1.500" fill="#8a8a8a"/><rect x="3.5" y="128.2" width="1.700" height="1.700" fill="#fff"/><rect x="4.3" y="137.0" width="1.500" height="1.500" fill="#8a8a8a"/><rect x="3.5" y="136.2" width="1.700" height="1.700" fill="#fff"/><rect x="4.3" y="145.10000000000002" width="1.500" height="1.500" fill="#8a8a8a"/><rect x="3.5" y="144.3" width="1.700" height="1.700" fill="#fff"/><rect x="4.3" y="153.20000000000002" width="1.500" height="1.500" fill="#8a8a8a"/><rect x="3.5" y="152.4" width="1.700" height="1.700" fill="#fff"/></svg>
<div style="left:265px;top:518px;width:330px;height:28px;background:#ccc;"></div>
<div style="left:281px;top:518px;width:298px;height:1px;background:#999;"></div>
<div style="left:281px;top:519px;width:61px;height:26px;background:#f7f6ee;border:1px solid #aaa;border-top:none;border-left:none;border-radius:0 0 5px 3px;"></div>
<div style="left:343px;top:518px;width:56px;height:28px;background:#fff;border-left:1px solid #999;border-right:1px solid #bbb;border-bottom:1px solid #bbb;border-radius:0 0 5px 5px;"></div>
<svg style="left:285px;top:523.5px;overflow:visible;" width="15" height="15" viewBox="0 0 15 15"><path d="M0.500 2.500v8h6M2.500 0.500h6l2.500 2.500v3" fill="none" stroke="#666" stroke-width="0.900" stroke-dasharray="2 1"/><rect x="1" y="1" width="9" height="9" fill="#fff" opacity="0.700"/><circle cx="4.300" cy="4.500" r="2.100" fill="#00e0ff" stroke="#f0e000" stroke-width="1.300"/><path d="M5.500 6.500l1.500 1.500" stroke="#000" stroke-width="1.200"/><path d="M7.5 13L13 7.5" stroke="#000" stroke-width="3.300"/><path d="M7.5 13L13 7.5" stroke="#f8e020" stroke-width="1.700"/><path d="M11.5 8.7L13 7.5" stroke="#e01010" stroke-width="1.900"/></svg>
<svg style="left:348.5px;top:525.5px;overflow:visible;" width="15" height="15" viewBox="0 0 15 15"><path d="M0.500 0.500h9.500v8M0.500 0.500v10h4" fill="#fff" stroke="#888" stroke-width="0.900"/><path d="M2 2.500h7M2 4.500h7M2 6.500h6M2 8.500h3" stroke="#444" stroke-width="0.900"/><path d="M6 13L12.5 6.5" stroke="#000" stroke-width="3.300"/><path d="M6 13L12.5 6.5" stroke="#f8e020" stroke-width="1.700"/><path d="M11.0 7.7L12.5 6.5" stroke="#e01010" stroke-width="1.900"/></svg>
<span class="t" style="left:299.4px;top:526px;letter-spacing:-0.4px;">Design</span>
<span class="t" style="left:365px;top:527px;letter-spacing:-1.0px;font-weight:bold;">Code</span>
<div style="left:398px;top:518px;width:2px;height:28px;background:#bbb;"></div>
<div style="left:399px;top:518px;width:175px;height:28px;background:#999;"></div>
<div style="left:400px;top:518px;width:14px;height:28px;background:#ccc;"></div>
<div style="left:559px;top:518px;width:15px;height:28px;background:#ccc;"></div>
<svg style="left:400px;top:519px;" width="14" height="13" viewBox="0 0 14 13"><rect width="14" height="13" fill="#b4b4b4"/><path d="M14 0.5H6.5Q0.5 0.5 0.5 6.5Q0.5 12.5 6.5 12.5H14z" fill="#ccc"/><path d="M14 0.5H6.5Q0.5 0.5 0.5 6.5Q0.5 12.5 6.5 12.5" fill="none" stroke="#fff"/><path d="M13.5 0V13" stroke="#777"/><path d="M9.500 2.5v8l-4.300 -4z" fill="#606060"/></svg>
<svg style="left:559px;top:519px;" width="14" height="13" viewBox="0 0 14 13"><rect width="14" height="13" fill="#b4b4b4"/><path d="M0 0.5H7.5Q13.5 0.5 13.5 6.5Q13.5 12.5 7.5 12.5H0z" fill="#ccc"/><path d="M0.5 0V13" stroke="#fff"/><path d="M0 0.5H7.5" stroke="#fff"/><path d="M9 1Q13.5 1.5 13.5 6.5Q13.5 12.5 7.5 12.5H0" fill="none" stroke="#777" stroke-width="0.8"/><path d="M4.500 2.5v8l4.300 -4z" fill="#606060"/></svg>
<div style="left:414px;top:518px;width:12px;height:28px;background:#ccc;border-top:1px solid #fff;border-left:1px solid #fff;border-bottom:1px solid #888;border-right:1px solid #666;"></div>
<svg style="left:414px;top:519px;" width="12" height="13" viewBox="0 0 12 13"><rect x="8.8" y="11.8" width="1.500" height="1.500" fill="#8a8a8a"/><rect x="8" y="11" width="1.700" height="1.700" fill="#fff"/><rect x="4.8" y="16.8" width="1.500" height="1.500" fill="#8a8a8a"/><rect x="4" y="16" width="1.700" height="1.700" fill="#fff"/></svg>
<div style="left:574px;top:518px;width:4px;height:28px;background:linear-gradient(90deg,#fff,#f7f6ee 40%,#d8d4c0);border-right:1px solid #444;"></div>
<div style="left:601px;top:91px;width:170px;height:456px;border:1px solid #999;"></div>
<div style="left:602px;top:117px;width:168px;height:1px;background:#999;"></div>
<svg style="left:608px;top:97px;overflow:visible;" width="16" height="14" viewBox="0 0 16 14"><circle cx="7" cy="2.500" r="2" fill="#f040e0" stroke="#a000a0" stroke-width="0.600"/><circle cx="10" cy="4.500" r="2" fill="#f8f020" stroke="#a09000" stroke-width="0.600"/><circle cx="6" cy="5" r="1.700" fill="#e8f8ff" stroke="#60a0c0" stroke-width="0.600"/><path d="M0.500 7.500l3-2.500h11.500l-3 2.500z" fill="#e0e0ff" stroke="#1a2490" stroke-width="0.900"/><path d="M12 7.500l3-2.500v5.500l-3 3z" fill="#9090d8" stroke="#1a2490" stroke-width="0.900"/><rect x="0.500" y="7.500" width="11.500" height="6" fill="#b8b8f0" stroke="#1a2490" stroke-width="0.900"/><path d="M1.500 9h10M1.500 10.500h10M1.500 12h10" stroke="#8080d0" stroke-width="0.700" stroke-dasharray="1 1"/></svg>
<span class="t" style="left:626.6px;top:101px;letter-spacing:-0.375px;">Component Palette</span>
<svg style="left:744px;top:100px;" width="10" height="10" viewBox="0 0 10 10"><path d="M2 0.700h6.200M2.500 0.500v5.800M4.500 6.500v3.300" stroke="#000" stroke-width="1" fill="none"/><rect x="6.400" y="0.200" width="1.900" height="6" fill="#000"/><path d="M0 6.400h10" stroke="#000" stroke-width="1.300"/></svg>
<svg style="left:758px;top:101px;" width="9" height="9" viewBox="0 0 9 9"><path d="M0.800 0.600l7 7.400m0.200-7.400l-7.200 7.400" stroke="#000" stroke-width="2" fill="none"/></svg>
<div style="left:603px;top:119px;width:166px;height:28px;border:1px solid #777;border-radius:4px;background:#ccc;box-shadow:inset 1px 1px 0 #fff,inset -1px -1px 0 #fff;"></div>
<span class="t" style="left:609.7px;top:129px;letter-spacing:-1.85px;">JSP</span>
<svg style="left:757px;top:130px;" width="9" height="5" viewBox="0 0 9 5"><path d="M0.5 0h8L4.5 4.5z" fill="#666"/></svg>
<div style="left:603px;top:147px;width:167px;height:2px;background:#f4f4f4;"></div>
<div style="left:603px;top:149px;width:167px;height:369px;border-top:1px solid #808080;border-left:1px solid #999;border-bottom:1px solid #fff;border-right:1px solid #fff;background:#ccc;"></div>
<span class="t" style="left:628.4px;top:162px;letter-spacing:-0.3px;">Pointer</span>
<span class="t" style="left:628.4px;top:195px;letter-spacing:-0.27px;">Declaration</span>
<span class="t" style="left:628.4px;top:228px;letter-spacing:-0.089px;">Expression</span>
<span class="t" style="left:628.4px;top:261px;letter-spacing:-0.285px;">Hidden Comment</span>
<span class="t" style="left:628.4px;top:294px;letter-spacing:-0.344px;">Include Directive</span>
<span class="t" style="left:628.4px;top:327px;letter-spacing:-0.477px;">Output Comment</span>
<span class="t" style="left:628.4px;top:360px;letter-spacing:-0.308px;">Page Directive</span>
<span class="t" style="left:627.2px;top:393px;letter-spacing:-0.35px;">Scriptlet</span>
<span class="t" style="left:628.8px;top:426px;letter-spacing:-0.073px;">jsp:fallback</span>
<span class="t" style="left:628.8px;top:459px;letter-spacing:0.09px;">jsp:forward</span>
<span class="t" style="left:628.8px;top:492px;letter-spacing:-0.057px;">jsp:getProperty</span>
<svg style="left:613px;top:160px;overflow:visible;" width="16" height="16" viewBox="0 0 16 16"><path d="M0.600 0.500v11.500l2.800-2.800 2 4.500 1.800-0.800-2-4.300h3.800z" fill="#fff" stroke="#0a2a0a" stroke-width="1.100"/></svg>
<svg style="left:611.5px;top:196.3px;overflow:visible;" width="16" height="16" viewBox="0 0 16 16"><path d="M4.500 0.800L1 4.300 4.500 7.800" fill="none" stroke="#1a24a8" stroke-width="1.700"/><rect x="7.500" y="0" width="2" height="5.300" fill="#1a24a8"/><rect x="7.500" y="6.200" width="2" height="1.800" fill="#1a24a8"/></svg>
<svg style="left:611.5px;top:228.3px;overflow:visible;" width="16" height="16" viewBox="0 0 16 16"><path d="M4.500 0.800L1 4.300 4.500 7.800" fill="none" stroke="#1a24a8" stroke-width="1.700"/><path d="M6 3h5.500M6 5.800h5.500" stroke="#1a24a8" stroke-width="1.600"/></svg>
<svg style="left:610.8px;top:258.2px;overflow:visible;" width="16" height="16" viewBox="0 0 16 16"><path d="M5 0.500h9v6.500h-3l-2.500 2v-2h-3.500z" fill="#fff" stroke="#444" stroke-width="0.900"/><path d="M14.200 1v6.200h-3" fill="none" stroke="#000" stroke-width="1"/><path d="M6.500 2.500h6M6.500 4.500h5" stroke="#2040e0" stroke-width="0.900"/><rect x="0.300" y="5.500" width="1.700" height="5" fill="#1a24a8"/><rect x="0.300" y="11.500" width="1.700" height="1.700" fill="#1a24a8"/><path d="M3.200 11.500h2.300M6.500 11.500h2.300" stroke="#1a24a8" stroke-width="1.600"/></svg>
<svg style="left:610.8px;top:291px;overflow:visible;" width="16" height="16" viewBox="0 0 16 16"><rect x="0.800" y="5" width="11" height="8" fill="#fff" stroke="#666" stroke-width="0.800"/><path d="M12 5.500v7.700h-11" fill="none" stroke="#000" stroke-width="1.100"/><path d="M4.500 7l-2 2.500 2 2.500M7.500 7l2 2.500-2 2.500" fill="none" stroke="#2040e0" stroke-width="1.100"/><path d="M0.300 2.800l4.500 3" stroke="#e01010" stroke-width="1.800"/><path d="M6 7l-3.500-0.300 2.500-3z" fill="#e01010"/><circle cx="10.3" cy="3.5" r="3" fill="none" stroke="#1030e0" stroke-width="1.200"/><circle cx="10.3" cy="3.5" r="1" fill="none" stroke="#1030e0" stroke-width="1"/><path d="M11.600000000000001 2.5v2.200" stroke="#1030e0" stroke-width="0.900"/></svg>
<svg style="left:615.3px;top:325px;overflow:visible;" width="16" height="16" viewBox="0 0 16 16"><path d="M0.300 1.500q2-3 4 0l-0.800 6.500h-2.400z" fill="#1a24a8"/><circle cx="2.300" cy="11" r="1.800" fill="#1a24a8"/></svg>
<svg style="left:610.8px;top:357px;overflow:visible;" width="16" height="16" viewBox="0 0 16 16"><path d="M0.800 2.500h7.500l2.500 2.500v8h-10z" fill="#fff" stroke="#555" stroke-width="0.900"/><path d="M11 5.500v7.700h-10" fill="none" stroke="#000" stroke-width="1"/><path d="M2.500 6h5M2.500 8h7M2.500 10h7M2.500 11.800h5" stroke="#888" stroke-width="0.800"/><circle cx="10.3" cy="3.2" r="3" fill="none" stroke="#1030e0" stroke-width="1.200"/><circle cx="10.3" cy="3.2" r="1" fill="none" stroke="#1030e0" stroke-width="1"/><path d="M11.600000000000001 2.2v2.200" stroke="#1030e0" stroke-width="0.900"/></svg>
<svg style="left:611.5px;top:393.3px;overflow:visible;" width="16" height="16" viewBox="0 0 16 16"><path d="M4.500 0.800L1 4.300 4.500 7.800" fill="none" stroke="#1a24a8" stroke-width="1.700"/><circle cx="7.300" cy="2.300" r="1.300" fill="none" stroke="#1a24a8" stroke-width="1.100"/><circle cx="11" cy="6.200" r="1.300" fill="none" stroke="#1a24a8" stroke-width="1.100"/><path d="M11.500 0.800L7 7.800" stroke="#1a24a8" stroke-width="1.200"/></svg>
<svg style="left:611px;top:423px;overflow:visible;" width="16" height="16" viewBox="0 0 16 16"><path d="M0.500 0.500h7.500l2.500 2.500v9h-10z" fill="#fff" stroke="#444" stroke-width="0.900"/><path d="M10.800 3.500v8.700h-10" fill="none" stroke="#000" stroke-width="1"/><circle cx="4" cy="4.800" r="2.100" fill="#00e0ff" stroke="#f0e000" stroke-width="1.300"/><path d="M5.500 6.500l1 0.800-0.800 0.800 1.500 1" stroke="#000" stroke-width="1.100" fill="none"/><path d="M14 10.500h-4" stroke="#1020c0" stroke-width="2.200"/><path d="M11 7l-4 3.500 4 3.500z" fill="#1020c0"/></svg>
<svg style="left:612.8px;top:459.5px;overflow:visible;" width="16" height="16" viewBox="0 0 16 16"><path d="M0.500 0.500v8l4.500-4z" fill="#a8d4ff" stroke="#102080" stroke-width="1"/><path d="M5.500 0.500v8l4.500-4z" fill="#a8d4ff" stroke="#102080" stroke-width="1"/></svg>
<svg style="left:610.8px;top:489px;overflow:visible;" width="16" height="16" viewBox="0 0 16 16"><ellipse cx="4.800" cy="9.300" rx="4.500" ry="3.500" transform="rotate(15 4.800 9.300)" fill="#f0a020" stroke="#403000" stroke-width="1"/><ellipse cx="4.800" cy="9" rx="2.500" ry="1.200" transform="rotate(15 4.800 9)" fill="#f8e080" stroke="#805000" stroke-width="0.700"/><path d="M7 7.500l4-4" stroke="#f02020" stroke-width="2.200"/><path d="M9 0.500l5 3-3.500 4.500z" fill="#f02020"/></svg>
<div style="left:753px;top:150px;width:16px;height:366px;background:#999;"></div>
<svg style="left:754px;top:150.5px;" width="13" height="14" viewBox="0 0 13 14"><rect width="13" height="14" fill="#b4b4b4"/><path d="M0.5 14V6.5Q0.5 0.5 6.5 0.5Q12.5 0.5 12.5 6.5V14z" fill="#ccc"/><path d="M0.5 14V6.5Q0.5 0.5 6.5 0.5Q12.5 0.5 12.5 6.5" fill="none" stroke="#fff"/><path d="M0 13.5H13" stroke="#777"/><path d="M2.5 9.500h8l-4 -4.300z" fill="#606060"/></svg>
<svg style="left:754px;top:501.5px;" width="13" height="14" viewBox="0 0 13 14"><rect width="13" height="14" fill="#b4b4b4"/><path d="M0.5 0V7.5Q0.5 13.5 6.5 13.5Q12.5 13.5 12.5 7.5V0z" fill="#ccc"/><path d="M0.5 0V7.5" stroke="#fff"/><path d="M0 0.5H13" stroke="#fff"/><path d="M1 9Q1.5 13.5 6.5 13.5Q12.5 13.5 12.5 7.5" fill="none" stroke="#777" stroke-width="0.8"/><path d="M2.5 4.500h8l-4 4.300z" fill="#606060"/></svg>
<div style="left:754px;top:164px;width:13px;height:232px;background:#ccc;border-top:1px solid #fff;border-left:1px solid #fff;border-bottom:1px solid #666;border-right:1px solid #aaa;"></div>
<svg style="left:754px;top:164px;" width="13" height="232" viewBox="0 0 13 232"><rect x="9.8" y="82.8" width="1.500" height="1.500" fill="#8a8a8a"/><rect x="9" y="82.0" width="1.700" height="1.700" fill="#fff"/><rect x="9.8" y="90.8" width="1.500" height="1.500" fill="#8a8a8a"/><rect x="9" y="90.0" width="1.700" height="1.700" fill="#fff"/><rect x="9.8" y="98.89999999999999" width="1.500" height="1.500" fill="#8a8a8a"/><rect x="9" y="98.1" width="1.700" height="1.700" fill="#fff"/><rect x="9.8" y="107.0" width="1.500" height="1.500" fill="#8a8a8a"/><rect x="9" y="106.2" width="1.700" height="1.700" fill="#fff"/><rect x="9.8" y="115.0" width="1.500" height="1.500" fill="#8a8a8a"/><rect x="9" y="114.2" width="1.700" height="1.700" fill="#fff"/><rect x="9.8" y="123.0" width="1.500" height="1.500" fill="#8a8a8a"/><rect x="9" y="122.2" width="1.700" height="1.700" fill="#fff"/><rect x="9.8" y="131.10000000000002" width="1.500" height="1.500" fill="#8a8a8a"/><rect x="9" y="130.3" width="1.700" height="1.700" fill="#fff"/><rect x="9.8" y="139.20000000000002" width="1.500" height="1.500" fill="#8a8a8a"/><rect x="9" y="138.4" width="1.700" height="1.700" fill="#fff"/><rect x="4.8" y="86.8" width="1.500" height="1.500" fill="#8a8a8a"/><rect x="4" y="86.0" width="1.700" height="1.700" fill="#fff"/><rect x="4.8" y="94.8" width="1.500" height="1.500" fill="#8a8a8a"/><rect x="4" y="94.0" width="1.700" height="1.700" fill="#fff"/><rect x="4.8" y="102.89999999999999" width="1.500" height="1.500" fill="#8a8a8a"/><rect x="4" y="102.1" width="1.700" height="1.700" fill="#fff"/><rect x="4.8" y="111.0" width="1.500" height="1.500" fill="#8a8a8a"/><rect x="4" y="110.2" width="1.700" height="1.700" fill="#fff"/><rect x="4.8" y="119.0" width="1.500" height="1.500" fill="#8a8a8a"/><rect x="4" y="118.2" width="1.700" height="1.700" fill="#fff"/><rect x="4.8" y="127.0" width="1.500" height="1.500" fill="#8a8a8a"/><rect x="4" y="126.2" width="1.700" height="1.700" fill="#fff"/><rect x="4.8" y="135.10000000000002" width="1.500" height="1.500" fill="#8a8a8a"/><rect x="4" y="134.3" width="1.700" height="1.700" fill="#fff"/></svg>
<div style="left:602px;top:517px;width:95px;height:30px;background:#fff;border-radius:0 0 6px 4px;border:1px solid #aaa;border-top:none;border-left:none;"></div>
<div style="left:699px;top:519px;width:66px;height:26px;background:#f7f6ee;border-radius:0 0 5px 5px;border:1px solid #aaa;border-top-color:#ccc;"></div>
<svg style="left:606px;top:524px;overflow:visible;" width="16" height="14" viewBox="0 0 16 14"><circle cx="7" cy="2.500" r="2" fill="#f040e0" stroke="#a000a0" stroke-width="0.600"/><circle cx="10" cy="4.500" r="2" fill="#f8f020" stroke="#a09000" stroke-width="0.600"/><circle cx="6" cy="5" r="1.700" fill="#e8f8ff" stroke="#60a0c0" stroke-width="0.600"/><path d="M0.500 7.500l3-2.500h11.500l-3 2.500z" fill="#e0e0ff" stroke="#1a2490" stroke-width="0.900"/><path d="M12 7.500l3-2.500v5.500l-3 3z" fill="#9090d8" stroke="#1a2490" stroke-width="0.900"/><rect x="0.500" y="7.500" width="11.500" height="6" fill="#b8b8f0" stroke="#1a2490" stroke-width="0.900"/><path d="M1.500 9h10M1.500 10.500h10M1.500 12h10" stroke="#8080d0" stroke-width="0.700" stroke-dasharray="1 1"/></svg>
<svg style="left:704.5px;top:523px;overflow:visible;" width="14" height="14" viewBox="0 0 14 14"><path d="M0.500 0.500h7l2.500 2.500v7.500h-9.500z" fill="#fff" stroke="#444" stroke-width="0.900"/><circle cx="4" cy="4.500" r="2.200" fill="#00e0ff" stroke="#f0e000" stroke-width="1.400"/><path d="M5.500 6.500l1.500 1.500" stroke="#000" stroke-width="1.200"/><path d="M7.500 7.500v4.500q0 1.500 3 1.500t3-1.500v-4.500" fill="#c8e0f8" stroke="#3060b0" stroke-width="0.900"/><ellipse cx="10.500" cy="7.500" rx="3" ry="1.500" fill="#e8f4ff" stroke="#3060b0" stroke-width="0.900"/><path d="M7.500 9.800q3 1.800 6 0" fill="none" stroke="#3060b0" stroke-width="0.800"/></svg>
<span class="t" style="left:621.5px;top:527px;letter-spacing:-0.389px;">Components</span>
<span class="t" style="left:718.5px;top:526px;letter-spacing:-0.157px;">Data ...</span>
<div style="left:5px;top:551px;width:769px;height:1px;background:#999;"></div>
<div style="left:5px;top:552px;width:769px;height:1px;background:#e4e4e4;"></div>
<div style="left:7px;top:554px;width:691px;height:27px;border:1px solid #b0b0b0;border-right-color:#fff;border-bottom-color:#f0f0f0;border-radius:9px;"></div>
<div style="left:649px;top:555px;width:1px;height:25px;background:#f4f4f4;"></div>
<div style="left:650px;top:555px;width:1px;height:25px;background:#aaa;"></div>
<span class="t" style="left:13.3px;top:562px;letter-spacing:0.099px;">/home/j/jdevhome/mywork/jspbog/kode/public_html/kapitel_02/hej_2.jsp</span>
<span class="t" style="left:703.9px;top:563px;letter-spacing:-0.44px;">Web Editing</span>
<svg style="left:11px;top:67px;overflow:visible;" width="16" height="16" viewBox="0 0 16 16"><path d="M0.5 0.5h8l3 3v9h-11z" fill="#fff"/><path d="M0.5 0.5v12" stroke="#bbb"/><path d="M0.5 0.5h8" stroke="#bbb"/><path d="M8.5 0.5l3 3v9h-11" fill="none" stroke="#000"/><path d="M8.5 0.5v3h3" fill="#ddd" stroke="#000" stroke-width="0.8"/></svg>
<svg style="left:32px;top:66px;overflow:visible;" width="16" height="16" viewBox="0 0 16 16"><path d="M6 3.5C7 0.5 11 0.5 12.5 3" fill="none" stroke="#1038d8" stroke-width="1.6"/><path d="M14.5 1v4h-4z" fill="#1038d8"/><path d="M0.5 13.5v-8.5l1.5-1.5h3.5l1.5 1.5h5v2" fill="#f8f0a0" stroke="#706000"/><path d="M0.5 13.5l3-6.5h11l-3 6.5z" fill="#d8c838" stroke="#605000"/><path d="M2 5.5h3M2 7h2" stroke="#c8b830" stroke-width="0.8"/></svg>
<svg style="left:54px;top:66px;overflow:visible;" width="16" height="16" viewBox="0 0 16 16"><path d="M0.5 0.5h12l1 1v12h-13z" fill="#999" stroke="#8a8a8a"/><rect x="3" y="1" width="8" height="5" fill="#b0b0b0"/><path d="M4 3h6" stroke="#8a8a8a"/><rect x="3" y="8.5" width="8" height="5" fill="#b4b4b4"/><rect x="4.5" y="9.5" width="2" height="4" fill="#8a8a8a"/></svg>
<svg style="left:76px;top:66px;overflow:visible;" width="16" height="16" viewBox="0 0 16 16"><path d="M4.5 0.5h9.5l1 1v9h-10.5z" fill="#fff" stroke="#000"/><path d="M2.5 2.0h9.5l1 1v9h-10.5z" fill="#fff" stroke="#000"/><path d="M0.5 3.5h9.5l1 1v9.5h-10.5z" fill="#8080e0" stroke="#000060"/><rect x="2.5" y="4" width="6" height="4" fill="#fff"/><rect x="2" y="9.5" width="7" height="1.6" fill="#e020c0"/><rect x="2.5" y="11.2" width="6" height="2.3" fill="#fff"/><rect x="3.5" y="11.5" width="2" height="2" fill="#000060"/></svg>
<svg style="left:103px;top:66px;overflow:visible;" width="16" height="16" viewBox="0 0 16 16"><path d="M5 9C6.500 3 14 2.500 13.800 10.500" fill="none" stroke="#999" stroke-width="2.400"/><path d="M0.300 5.500l8.200 2-6.200 5.800z" fill="#999"/></svg>
<svg style="left:125px;top:66px;overflow:visible;" width="16" height="16" viewBox="0 0 16 16"><path d="M10 9C8.500 3 1 2.500 1.200 10.500" fill="none" stroke="#999" stroke-width="2.400"/><path d="M14.700 5.500l-8.200 2 6.200 5.800z" fill="#999"/></svg>
<svg style="left:153.5px;top:66px;overflow:visible;" width="16" height="16" viewBox="0 0 16 16"><path d="M12.500 0.5L5 10.500" stroke="#000" stroke-width="1.6"/><path d="M2 1l7.500 9.500" stroke="#000" stroke-width="1.6"/><path d="M13.300 1L8 8" stroke="#30a0ff" stroke-width="0.9"/><circle cx="3.200" cy="11" r="2.100" fill="#fff" stroke="#000" stroke-width="1.300"/><circle cx="11" cy="11.500" r="2.100" fill="#fff" stroke="#000" stroke-width="1.300"/></svg>
<svg style="left:175.5px;top:66px;overflow:visible;" width="16" height="16" viewBox="0 0 16 16"><path d="M0.5 0.5h6l2 2v9h-8z" fill="#d0d0c0" stroke="#706000"/><path d="M5.500 3.500h6l2.500 2.500v7.500h-8.500z" fill="#fff" stroke="#000"/><path d="M7 6.500h3M7 8.500h5M7 10.500h5M7 12h5" stroke="#4060ff" stroke-width="0.9"/><path d="M11.500 3.500v2.500h2.500" fill="none" stroke="#000" stroke-width="0.8"/></svg>
<svg style="left:197.5px;top:66px;overflow:visible;" width="16" height="16" viewBox="0 0 16 16"><rect x="0.5" y="2.500" width="11" height="11" rx="1" fill="#b0a840" stroke="#605800"/><path d="M3 3.500l1.500-2.500h3l1.500 2.500z" fill="#f0e070" stroke="#605800" stroke-width="0.8"/><path d="M5.500 6.500h5.500l2.500 2.500v5h-8z" fill="#fff" stroke="#000"/><path d="M7 9.500h3M7 11.500h5" stroke="#4060ff" stroke-width="0.9"/></svg>
<svg style="left:224.5px;top:66.5px;overflow:visible;" width="16" height="16" viewBox="0 0 16 16"><rect x="0.5" y="0.5" width="8.500" height="7.500" fill="#fff" stroke="#000"/><rect x="1" y="1" width="7.500" height="2.200" fill="#000080"/><rect x="4" y="1.300" width="1.500" height="1" fill="#30d030"/><path d="M10.500 2.500Q13 2.500 12.500 6" fill="none" stroke="#1030e0" stroke-width="1.700"/><path d="M9.500 6h6l-3 3.200z" fill="#1030e0"/><text x="0" y="14" font-family="DejaVu Sans,Liberation Sans,sans-serif" font-size="7" fill="#000080" stroke="#000080" stroke-width="0.250" textLength="15.500" lengthAdjust="spacingAndGlyphs">01010</text></svg>
<svg style="left:246.5px;top:66.5px;overflow:visible;" width="16" height="16" viewBox="0 0 16 16"><path d="M0.5 6.500v-5.500l1-1h3l1 1h3v2" fill="#f8f0a0" stroke="#908000" stroke-width="0.9"/><path d="M2.500 7.500v-4.500h6.500v4.500z" fill="#f0e890" stroke="#908000" stroke-width="0.9"/><rect x="3.500" y="4.500" width="5.500" height="4.500" fill="#fff" stroke="#000"/><rect x="4" y="5" width="4.500" height="1.500" fill="#000080"/><path d="M10.500 3Q13 3 12.500 6" fill="none" stroke="#1030e0" stroke-width="1.700"/><path d="M9.500 6h6l-3 3.200z" fill="#1030e0"/><text x="0" y="14" font-family="DejaVu Sans,Liberation Sans,sans-serif" font-size="7" fill="#000080" stroke="#000080" stroke-width="0.250" textLength="15.500" lengthAdjust="spacingAndGlyphs">01010</text></svg>
<svg style="left:269px;top:66.5px;overflow:visible;" width="16" height="16" viewBox="0 0 16 16"><rect x="0.5" y="0.5" width="5" height="8" fill="#aaa" stroke="#999"/><path d="M7 3Q9 3 8.500 6" fill="none" stroke="#999" stroke-width="1.400"/><path d="M9 1l6 5m0-5l-6 5" stroke="#999" stroke-width="1.800"/><text x="0" y="14" font-family="DejaVu Sans,Liberation Sans,sans-serif" font-size="7" fill="#a0a0a0" stroke="#a0a0a0" stroke-width="0.250" textLength="15.500" lengthAdjust="spacingAndGlyphs">01010</text></svg>
<svg style="left:298px;top:67px;overflow:visible;" width="16" height="16" viewBox="0 0 16 16"><path d="M0.300 1h2.500M10.500 1h2.500" stroke="#000" stroke-width="0.900"/><path d="M0.800 1.200l1.700 2M12.500 1.200l-1.700 2" stroke="#333" stroke-width="0.700"/><rect x="2.500" y="0.500" width="8" height="11" rx="1" fill="#f8f8ff" stroke="#777" stroke-width="0.800"/><path d="M10.700 1.500v10.200h-7.500" fill="none" stroke="#000" stroke-width="1"/><rect x="3.500" y="8" width="6.500" height="3" fill="#c8cce8"/><rect x="3.800" y="2" width="5.600" height="5.600" fill="#2038f0"/><circle cx="6.600" cy="4.800" r="2.300" fill="#e8ffe8" stroke="#10c010" stroke-width="1"/><path d="M5.300 3.500l2.600 2.600m0-2.600l-2.600 2.600" stroke="#10a010" stroke-width="0.900"/></svg>
<svg style="left:326px;top:68.5px;overflow:visible;" width="16" height="16" viewBox="0 0 16 16"><path d="M3 0.500Q0.500 0.500 1.500 3.500L0.300 5.500l1.200 2Q0.500 10.500 3 10.500" fill="none" stroke="#999" stroke-width="1"/><rect x="3.500" y="0.500" width="10" height="10" fill="#aaa" stroke="#999"/><path d="M4 3h9" stroke="#999" stroke-width="1"/><rect x="4" y="1" width="9" height="1.500" fill="#bbb"/></svg>
<svg style="left:354px;top:67px;overflow:visible;" width="16" height="16" viewBox="0 0 16 16"><path d="M1 3l3 2.500M0.500 8.500h3M2 12l2.500-2M13 2l-2.500 3M14 7.500h-3M12 12l-2-2.500M5 1l2 2.500M9.500 0.500l-1 3" stroke="#000" stroke-width="1"/><ellipse cx="7" cy="7.500" rx="4.800" ry="3.800" transform="rotate(-30 7 7.500)" fill="#e81010" stroke="#600000" stroke-width="0.8"/><path d="M4.500 9.500l5-4" stroke="#ff9090" stroke-width="0.9"/><circle cx="10.500" cy="4" r="1.600" fill="#200000"/></svg>
<svg style="left:376.7px;top:68.2px;overflow:visible;" width="16" height="16" viewBox="0 0 16 16"><rect x="0" y="0.500" width="1.800" height="9" fill="#999"/><rect x="3" y="0.500" width="1.800" height="9" fill="#999"/><path d="M6 0.500v9l6.500-4.500z" fill="#999"/></svg>
<svg style="left:399px;top:66.3px;overflow:visible;" width="16" height="16" viewBox="0 0 16 16"><rect x="5.5" y="0.500" width="7" height="12.500" fill="#b0b0b0" stroke="#999"/><path d="M8.0 3h3M8.0 5.500h3M8.0 8h3M8.0 10.500h3" stroke="#999" stroke-width="1"/><path d="M5 2.500Q0.500 2.500 0.500 6Q0.500 9.500 4 9.500" fill="none" stroke="#999" stroke-width="1.300"/><path d="M3.500 7l3 2.500-3 2.500z" fill="#999"/></svg>
<svg style="left:421px;top:66.3px;overflow:visible;" width="16" height="16" viewBox="0 0 16 16"><rect x="5.5" y="0.500" width="7" height="12.500" fill="#b0b0b0" stroke="#999"/><path d="M8.0 3h3M8.0 5.500h3M8.0 8h3M8.0 10.500h3" stroke="#999" stroke-width="1"/><path d="M0.500 0.500v3Q0.500 6 3.500 6" fill="none" stroke="#999" stroke-width="1.300"/><path d="M3 3.500l3 2.500-3 2.500z" fill="#999"/></svg>
<svg style="left:442px;top:66.3px;overflow:visible;" width="16" height="16" viewBox="0 0 16 16"><rect x="6.5" y="0.500" width="7" height="12.500" fill="#b0b0b0" stroke="#999"/><path d="M9.0 3h3M9.0 5.500h3M9.0 8h3M9.0 10.500h3" stroke="#999" stroke-width="1"/><path d="M5 0.500v8Q5 10.500 2.500 10.500" fill="none" stroke="#999" stroke-width="1.300"/><path d="M3.500 8l-3.500 2.500 3.500 2.500z" fill="#999"/></svg>
<svg style="left:464.7px;top:66.3px;overflow:visible;" width="16" height="16" viewBox="0 0 16 16"><rect x="5.5" y="0.500" width="7" height="12.500" fill="#b0b0b0" stroke="#999"/><path d="M8.0 3h3M8.0 5.500h3M8.0 8h3M8.0 10.500h3" stroke="#999" stroke-width="1"/><path d="M0.500 0.500v8Q0.500 11 3.500 11" fill="none" stroke="#999" stroke-width="1.300"/><path d="M3 8.500l3 2.500-3 2.500z" fill="#999"/><path d="M0 0.500h5" stroke="#999"/></svg>
<svg style="left:488.2px;top:68.2px;overflow:visible;" width="16" height="16" viewBox="0 0 16 16"><rect x="0" y="0" width="3.800" height="9.500" fill="#999"/><rect x="6" y="0" width="3.800" height="9.500" fill="#999"/></svg>
<svg style="left:510px;top:68.2px;overflow:visible;" width="16" height="16" viewBox="0 0 16 16"><rect x="0" y="0" width="10" height="9.500" fill="#999"/></svg>
<svg style="left:531px;top:66.3px;overflow:visible;" width="16" height="16" viewBox="0 0 16 16"><path d="M0.500 3.500Q6.500 -0.500 12 3.500" fill="#aaa" stroke="#999"/><path d="M4.500 1.500Q6 -0.500 8 1.500" fill="none" stroke="#999"/><path d="M1.500 4.500h9.500l-1 8.500h-7.500z" fill="#aaa" stroke="#999"/><path d="M4 6v6M6.300 6v6M8.600 6v6" stroke="#999" stroke-width="0.9"/></svg>
</div>
</body></html>
